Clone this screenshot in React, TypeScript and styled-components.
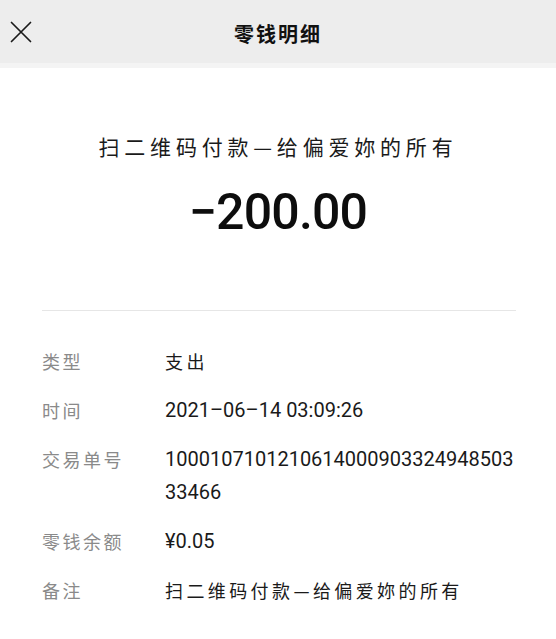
import React from "react";
import styled, { createGlobalStyle } from "styled-components";

const Global = createGlobalStyle`
  html, body { margin: 0; padding: 0; background: #ffffff; }
  body { font-family: Roboto, "Noto Sans CJK SC", sans-serif; }
`;

const Page = styled.div`
  width: 556px;
  height: 639px;
  background: #ffffff;
  overflow: hidden;
`;

const Header = styled.header`
  height: 63px;
  background: #ededed;
  border-bottom: 5px solid #f4f4f4;
  display: grid;
  grid-template-columns: 60px 1fr 60px;
  align-items: center;
`;

const CloseButton = styled.button`
  border: 0;
  background: none;
  padding: 0 0 0 10px;
  margin: 0;
  height: 100%;
  display: flex;
  align-items: center;
  cursor: pointer;
`;

const Title = styled.h1`
  margin: 0;
  text-align: center;
  font-family: "Noto Sans CJK SC", sans-serif;
  font-weight: 700;
  font-size: 20px;
  letter-spacing: 2px;
  color: #111111;
  padding-top: 4px;
`;

const Summary = styled.section`
  padding: 63px 0 0;
  display: flex;
  flex-direction: column;
  align-items: center;
`;

const Payee = styled.div`
  font-family: "Noto Sans CJK SC", sans-serif;
  font-size: 21px;
  letter-spacing: 4.8px;
  line-height: 30px;
  color: #1a1a1a;
`;

const Amount = styled.div`
  margin-top: 21px;
  font-family: Roboto, sans-serif;
  font-weight: 500;
  font-size: 50px;
  line-height: 60px;
  color: #0d0d0d;
  letter-spacing: -0.8px;
`;

const Divider = styled.hr`
  margin: 68px 40px 0 42px;
  border: 0;
  border-top: 1px solid #e6e6e6;
`;

const Details = styled.dl`
  margin: 34px 0 0 42px;
  display: grid;
  grid-template-columns: 123px 1fr;
  row-gap: 16px;
`;

const Label = styled.dt`
  margin: 0;
  font-family: "Noto Sans CJK SC", sans-serif;
  font-size: 18px;
  letter-spacing: 2.5px;
  line-height: 33px;
  color: #8a8a8a;
`;

const Value = styled.dd<{ $cjk?: boolean }>`
  margin: 0;
  font-family: ${(p) => (p.$cjk ? `"Noto Sans CJK SC", sans-serif` : `Roboto, "Noto Sans CJK SC", sans-serif`)};
  font-size: ${(p) => (p.$cjk ? "18px" : "20px")};
  letter-spacing: ${(p) => (p.$cjk ? "3.4px" : "0px")};
  line-height: 33px;
  color: #1a1a1a;
  word-break: break-all;
  max-width: 352px;
`;

const CloseIcon = () => (
  <svg width="22" height="22" viewBox="0 0 22 22" fill="none">
    <path d="M1.5 1.5 L20.5 20.5 M20.5 1.5 L1.5 20.5" stroke="#1a1a1a" strokeWidth="1.7" strokeLinecap="round" />
  </svg>
);

const rows: { label: string; value: string; cjk?: boolean }[] = [
  { label: "类型", value: "支出", cjk: true },
  { label: "时间", value: "2021–06–14 03:09:26" },
  { label: "交易单号", value: "100010710121061400090332494850333466" },
  { label: "零钱余额", value: "¥0.05" },
  { label: "备注", value: "扫二维码付款—给偏爱妳的所有", cjk: true },
];

export default function App() {
  return (
    <Page>
      <Global />
      <Header>
        <CloseButton aria-label="关闭">
          <CloseIcon />
        </CloseButton>
        <Title>零钱明细</Title>
        <span />
      </Header>
      <Summary>
        <Payee>扫二维码付款—给偏爱妳的所有</Payee>
        <Amount>−200.00</Amount>
      </Summary>
      <Divider />
      <Details>
        {rows.map((r) => (
          <React.Fragment key={r.label}>
            <Label>{r.label}</Label>
            <Value $cjk={r.cjk}>{r.value}</Value>
          </React.Fragment>
        ))}
      </Details>
    </Page>
  );
}
